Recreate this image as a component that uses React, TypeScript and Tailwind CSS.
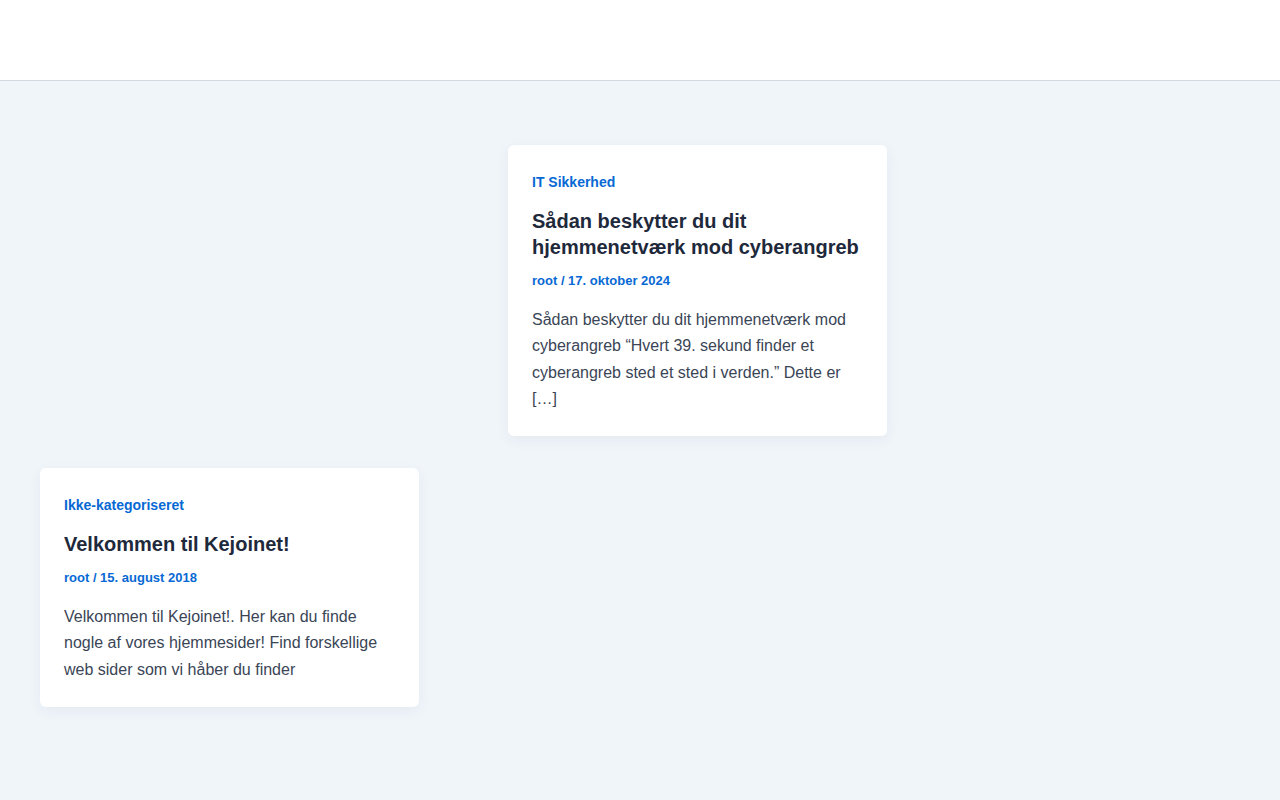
import React from 'react';

interface PostCardProps {
  category: string;
  title: string;
  meta: string;
  excerpt: string;
}

const PostCard = ({ category, title, meta, excerpt }: PostCardProps) => (
  <article className="w-[379px] bg-white rounded-md p-6 shadow-[0_4px_14px_rgba(30,50,90,0.06)]">
    <a className="block text-[14px] leading-[26px] font-bold text-[#0869d4]">{category}</a>
    <h2 className="mt-[13px] text-[20px] leading-[26px] font-bold text-[#1e293b]">{title}</h2>
    <p className="mt-[10px] text-[13px] leading-[21px] font-bold text-[#0869d4]">{meta}</p>
    <p className="mt-4 text-[16px] leading-[26.25px] text-[#3a4556]">{excerpt}</p>
  </article>
);

export default function App() {
  return (
    <div className="min-h-[800px] bg-[#f0f5fa] font-['Liberation_Sans',Arial,sans-serif]">
      <header className="h-[81px] bg-white border-b border-[#d3d8e0]" />
      <main className="px-10 pt-16 pb-20">
        <div className="ml-[468px]">
          <PostCard
            category="IT Sikkerhed"
            title="Sådan beskytter du dit hjemmenetværk mod cyberangreb"
            meta="root / 17. oktober 2024"
            excerpt="Sådan beskytter du dit hjemmenetværk mod cyberangreb “Hvert 39. sekund finder et cyberangreb sted et sted i verden.” Dette er […]"
          />
        </div>
        <div className="mt-8">
          <PostCard
            category="Ikke-kategoriseret"
            title="Velkommen til Kejoinet!"
            meta="root / 15. august 2018"
            excerpt="Velkommen til Kejoinet!. Her kan du finde nogle af vores hjemmesider! Find forskellige web sider som vi håber du finder"
          />
        </div>
      </main>
    </div>
  );
}
